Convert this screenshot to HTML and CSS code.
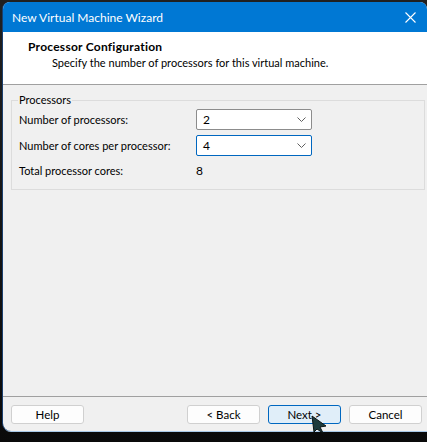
FILE: index.html
```html
<!DOCTYPE html>
<html>
<head>
<meta charset="utf-8">
<link rel="stylesheet" href="styles.css">
</head>
<body>
<div class="window">
  <div class="titlebar">
    <span class="title">New Virtual Machine Wizard</span>
    <svg class="close" width="11" height="11" viewBox="0 0 11 11"><path d="M0.5 0.5 L10.5 10.5 M10.5 0.5 L0.5 10.5" stroke="#fff" stroke-width="1.1" fill="none"/></svg>
  </div>
  <div class="header">
    <div class="h-title">Processor Configuration</div>
    <div class="h-sub">Specify the number of processors for this virtual machine.</div>
  </div>
  <div class="content">
    <fieldset class="group">
      <legend class="legend">Processors</legend>
      <div class="row first">
        <span class="label">Number of processors:</span>
        <div class="select"><span>2</span><svg class="chev" width="9" height="5" viewBox="0 0 9 5"><path d="M0.5 0.5 L4.5 4.5 L8.5 0.5" stroke="#606060" fill="none" stroke-width="1"/></svg></div>
      </div>
      <div class="row">
        <span class="label">Number of cores per processor:</span>
        <div class="select focus"><span>4</span><svg class="chev" width="9" height="5" viewBox="0 0 9 5"><path d="M0.5 0.5 L4.5 4.5 L8.5 0.5" stroke="#606060" fill="none" stroke-width="1"/></svg></div>
      </div>
      <div class="row total">
        <span class="label">Total processor cores:</span>
        <span class="value">8</span>
      </div>
    </fieldset>
  </div>
  <div class="footer">
    <button class="btn">Help</button>
    <div class="spacer"></div>
    <button class="btn">&lt; Back</button>
    <button class="btn primary">Next &gt;</button>
    <button class="btn">Cancel</button>
  </div>
</div>
<svg class="cursor" width="18" height="20" viewBox="0 0 18 20"><path d="M1 1 L15 11 L9 12 L12 18 L6 14 L3 17 Z" fill="#1d3b3c" stroke="#0b1414" stroke-width="1" stroke-linejoin="round"/></svg>
</body>
</html>
```

FILE: styles.css
```css
html, body {
  margin: 0;
  padding: 0;
}
body {
  width: 427px;
  height: 442px;
  overflow: hidden;
  position: relative;
  font-family: Lato, "Noto Sans", sans-serif;
  font-size: 11px;
  color: #000;
  background: linear-gradient(#202020 0, #202020 10px, #0a0a0a 100%);
}
.window {
  margin: 2px 0 0 3px;
  width: 424px;
  height: 429px;
  background: #f0f0f0;
  border-radius: 7px 7px 0 8px;
  overflow: hidden;
  display: flex;
  flex-direction: column;
  box-shadow: -1px 0 0 #1a3f6e, 0 1px 0 #a9c9e8;
  white-space: nowrap;
}
.titlebar {
  height: 30px;
  background: #0078d4;
  display: flex;
  align-items: center;
  padding: 0 9px;
  flex-shrink: 0;
}
.title {
  color: #fff;
  font-size: 12px;
  flex: 1;
}
.close {
  margin-right: 2px;
}
.header {
  background: #fff;
  border-bottom: 1px solid #a0a0a0;
  padding: 7px 0 0 25px;
  box-sizing: border-box;
  height: 53px;
  flex-shrink: 0;
}
.h-title {
  font-weight: bold;
  font-size: 12px;
  letter-spacing: 0.25px;
  line-height: 16px;
}
.h-sub {
  line-height: 15px;
  padding-left: 24px;
}
.content {
  flex: 1;
  padding: 8px 2px 0 8px;
}
.group {
  margin: 0;
  border: 1px solid #dcdcdc;
  padding: 0 7px 4px 7px;
  height: 97px;
  box-sizing: border-box;
}
.legend {
  padding: 0 1px;
  margin-left: -1px;
  line-height: 14px;
}
.row {
  display: flex;
  align-items: center;
  height: 26px;
}
.row.first {
  margin-top: -1px;
}
.label {
  width: 177px;
}
.select {
  width: 116px;
  height: 21px;
  box-sizing: border-box;
  border: 1px solid #8c8c8c;
  border-radius: 2px;
  background: #fff;
  display: flex;
  align-items: center;
  padding: 0 5px 0 6px;
  font-size: 12px;
}
.select span {
  flex: 1;
}
.select.focus {
  border-color: #0067c0;
}
.row.total {
  height: 24px;
}
.value {
  font-size: 12px;
}
.footer {
  height: 35px;
  box-sizing: border-box;
  flex-shrink: 0;
  border-top: 1px solid #a0a0a0;
  display: flex;
  align-items: flex-start;
  padding: 8px 5px 0 8px;
  gap: 8px;
}
.spacer {
  flex: 1;
}
.btn {
  width: 73px;
  height: 19px;
  box-sizing: border-box;
  border: 1px solid #d0d0d0;
  border-radius: 3px;
  background: #fdfdfd;
  font-family: inherit;
  font-size: 11.5px;
  color: #000;
  padding: 0;
  line-height: 16px;
}
.btn.primary {
  background: #e0eef9;
  border-color: #0067c0;
}
.cursor {
  position: absolute;
  left: 311px;
  top: 415px;
}
```
